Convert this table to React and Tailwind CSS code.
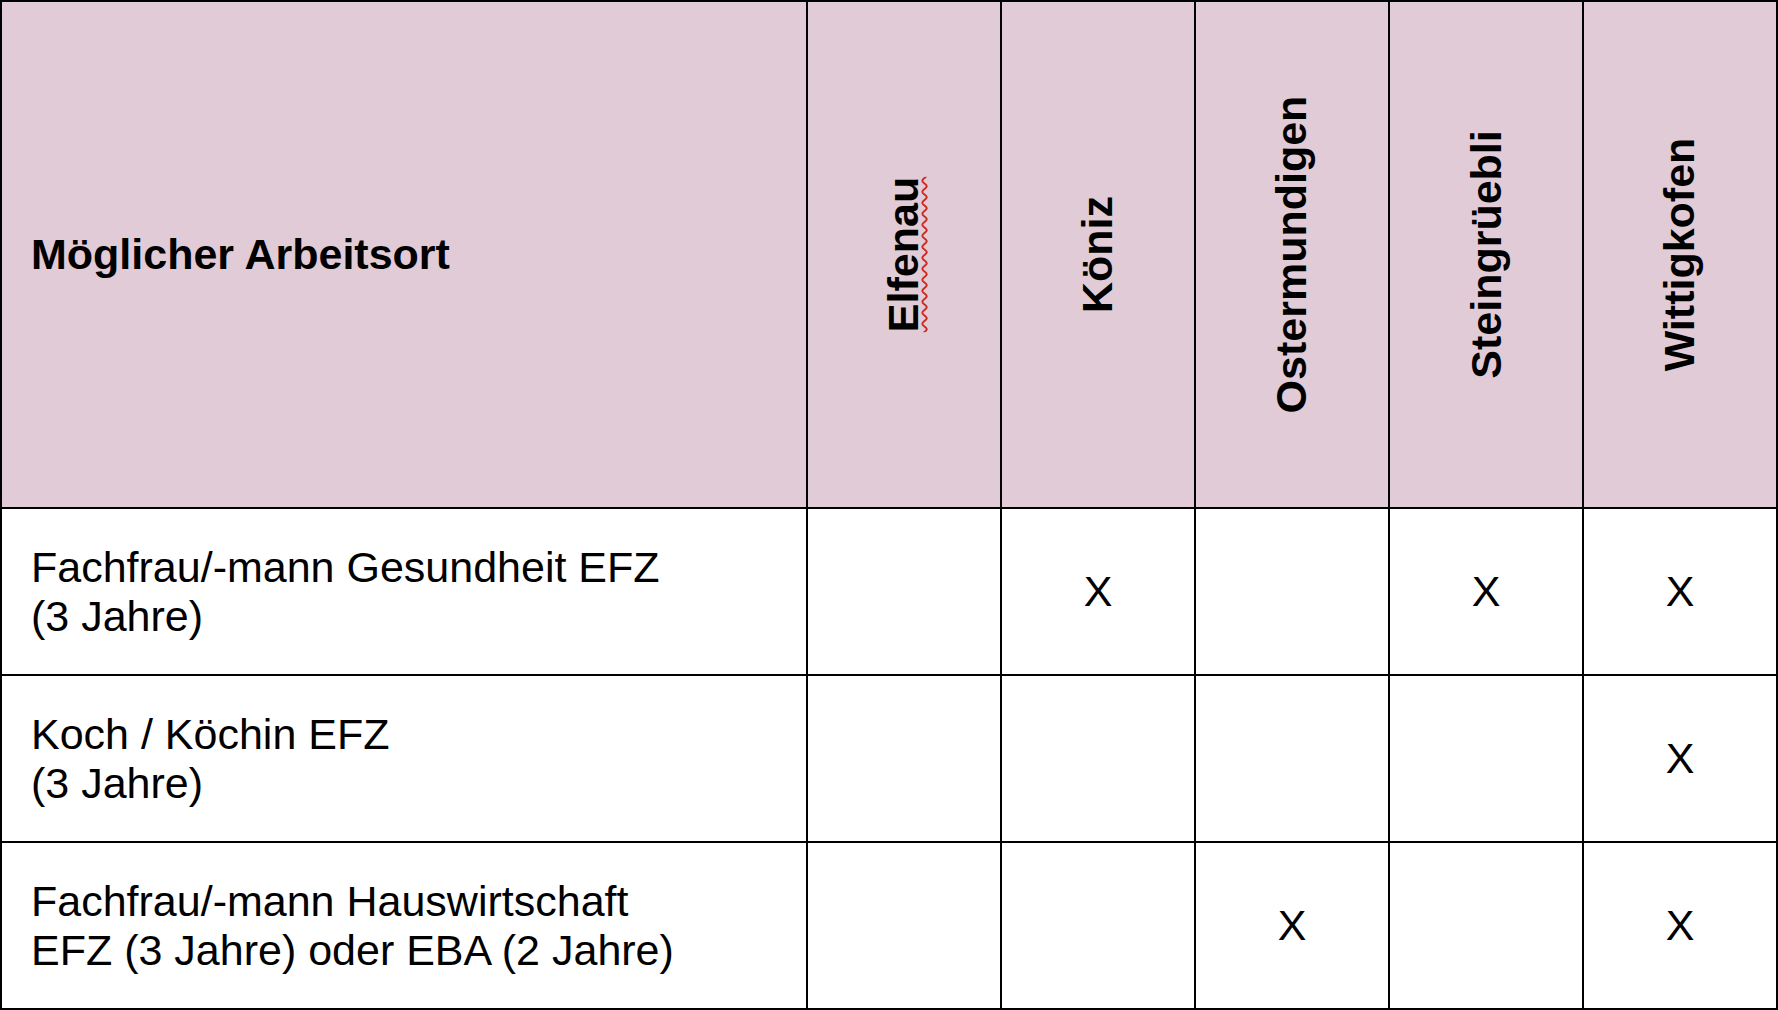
import React from "react";

const places = ["Elfenau", "Köniz", "Ostermundigen", "Steingrüebli", "Wittigkofen"];

const rows = [
  { lines: ["Fachfrau/-mann Gesundheit EFZ", "(3 Jahre)"], marks: [false, true, false, true, true] },
  { lines: ["Koch / Köchin EFZ", "(3 Jahre)"], marks: [false, false, false, false, true] },
  { lines: ["Fachfrau/-mann Hauswirtschaft", "EFZ (3 Jahre) oder EBA (2 Jahre)"], marks: [false, false, true, false, true] },
];

export default function App() {
  return (
    <div
      className="w-[1778px] h-[1010px] bg-white text-black overflow-hidden"
      style={{ fontFamily: '"Liberation Sans", Arial, Helvetica, sans-serif' }}
    >
      <div className="grid grid-cols-[806px_repeat(5,194px)] grid-rows-[507px_167px_167px_167px] border-t-2 border-l-2 border-black">
        <div className="bg-[#e0cbd7] border-r-2 border-b-2 border-black flex items-center pl-[29px]">
          <span className="text-[43px] font-bold leading-[49px]">Möglicher Arbeitsort</span>
        </div>
        {places.map((p, i) => (
          <div
            key={p}
            className="bg-[#e0cbd7] border-r-2 border-b-2 border-black flex items-center justify-center"
          >
            <span
              className={
                "-rotate-90 whitespace-nowrap text-[43px] font-bold leading-[49px] " +
                (i === 0 ? "underline decoration-wavy decoration-[#cc2a1e] decoration-2 underline-offset-[3px]" : "")
              }
            >
              {p}
            </span>
          </div>
        ))}
        {rows.map((r, ri) => (
          <React.Fragment key={ri}>
            <div className="border-r-2 border-b-2 border-black flex flex-col justify-center pl-[29px] text-[43px] leading-[49px]">
              {r.lines.map((l, li) => (
                <span key={li} className="whitespace-nowrap">{l}</span>
              ))}
            </div>
            {r.marks.map((m, mi) => (
              <div
                key={mi}
                className="border-r-2 border-b-2 border-black flex items-center justify-center text-[43px] leading-[49px]"
              >
                {m ? "X" : ""}
              </div>
            ))}
          </React.Fragment>
        ))}
      </div>
    </div>
  );
}
